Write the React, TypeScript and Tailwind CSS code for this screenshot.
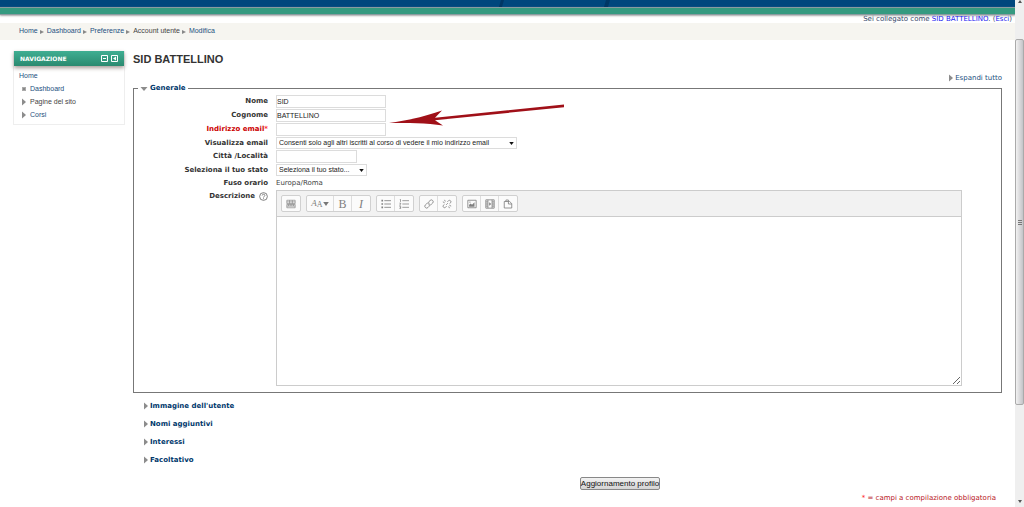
import { useState } from 'react';
import type { ReactNode } from 'react';
import clsx from 'clsx';

const breadcrumbs = ['Home', 'Dashboard', 'Preferenze', 'Account utente', 'Modifica'];
const sections = ["Immagine dell'utente", 'Nomi aggiuntivi', 'Interessi', 'Facoltativo'];

const fieldClass = 'block h-[13px] border border-[#dcdcdc] bg-white text-[7px] leading-[11px] text-[#222] outline-none';

const Triangle = ({ down = false }: { down?: boolean }) => (
    <svg viewBox="0 0 8 8" className={clsx('h-2 w-2 shrink-0', down && 'rotate-90')} aria-hidden="true">
        <path d="M2 .5 6 4 2 7.5Z" fill="#8c8c8c" />
    </svg>
);

const Row = ({ label, htmlFor, required, children }: { label: ReactNode; htmlFor?: string; required?: boolean; children: ReactNode }) => (
    <div className="flex items-start gap-2">
        <label
            htmlFor={htmlFor}
            className={clsx('flex w-[134px] shrink-0 justify-end gap-1 leading-3 font-bold', required ? 'text-[#c00]' : 'text-[#333]')}
        >
            {label}
        </label>
        {children}
    </div>
);

const SelectBox = ({ id, width, option }: { id: string; width: string; option: string }) => (
    <div className={clsx('relative', width)}>
        <select
            id={id}
            className="block h-3 w-full appearance-none border border-[#dcdcdc] bg-white pl-[2px] font-['Liberation_Sans',sans-serif] text-[7px] leading-[10px] text-[#222] outline-none"
        >
            <option>{option}</option>
        </select>
        <svg viewBox="0 0 6 4" className="pointer-events-none absolute top-[5px] right-[3px] h-[3px] w-[5px]" aria-hidden="true">
            <path d="M0 0h6L3 4Z" fill="#111" />
        </svg>
    </div>
);

const Group = ({ children }: { children: ReactNode }) => (
    <div className="flex h-[17px] divide-x divide-[#ddd] rounded-xs border border-[#d0d0d0] bg-[#fbfbfb]">{children}</div>
);

const Tool = ({ name, wide = false, children }: { name: string; wide?: boolean; children: ReactNode }) => (
    <button
        type="button"
        aria-label={name}
        className={clsx('flex h-full items-center justify-center font-["Liberation_Serif",serif] leading-none text-[#808080]', wide ? 'w-[27px]' : 'w-[18px]')}
    >
        {children}
    </button>
);

const Icon = ({ children }: { children: ReactNode }) => (
    <svg viewBox="0 0 12 12" className="h-[10px] w-[10px]" fill="none" stroke="#808080" strokeWidth="1" aria-hidden="true">
        {children}
    </svg>
);

const Toolbar = () => (
    <div className="flex flex-wrap gap-[5px] border-b border-[#ccc] bg-[#f2f2f2] p-1">
        <Group>
            <Tool name="Mostra altri pulsanti">
                <Icon>
                    <path d="M1 1.5h10v4H1zM1 6.5h10v4H1zM1 3.5h10M1 8.5h10M4.3 1.5v4M7.6 1.5v4M3 6.5v2M5 6.5v2M7 6.5v2M9 6.5v2" strokeWidth=".8" />
                </Icon>
            </Tool>
        </Group>
        <Group>
            <Tool name="Stili paragrafo" wide>
                <span className="text-[9px] italic">A</span>
                <span className="pt-[2px] text-[8px]">A</span>
                <svg viewBox="0 0 7 5" className="h-1 w-[6px]" aria-hidden="true">
                    <path d="M0 0h7L3.5 5Z" fill="#777" />
                </svg>
            </Tool>
            <Tool name="Grassetto"><span className="text-[12px]">B</span></Tool>
            <Tool name="Corsivo"><span className="text-[12px] italic">I</span></Tool>
        </Group>
        <Group>
            <Tool name="Elenco puntato">
                <Icon><path d="M4 2h8M4 6h8M4 10h8" /><path d="M.5 2h2M.5 6h2M.5 10h2" strokeWidth="2" /></Icon>
            </Tool>
            <Tool name="Elenco numerato">
                <Icon><path d="M4 2h8M4 6h8M4 10h8M1 .5h.8v3M.5 5h1.5v1L.7 7.2H2.2M.5 8.8H2v2.7H.5M1 10.2h1" strokeWidth=".9" /></Icon>
            </Tool>
        </Group>
        <Group>
            <Tool name="Link">
                <Icon><path d="M6.2 5.8a2.3 2.3 0 0 1 0-3l1-1a2.2 2.2 0 0 1 3.2 3.1L8.6 6.6a2 2 0 0 1-2 .4M5.8 6.2a2.3 2.3 0 0 1 0 3l-1 1a2.2 2.2 0 0 1-3.2-3.1l1.8-1.7a2 2 0 0 1 2-.4" /></Icon>
            </Tool>
            <Tool name="Scollega">
                <Icon><path d="m6.5 3.4 1.4-1.5a1.8 1.8 0 0 1 2.5 2.5L9 5.7M5.5 8.6l-1.4 1.5a1.8 1.8 0 0 1-2.5-2.5L3 6.3M3 1l1 2M1 3.5l2 .8M9 11 8 9M11 8.5l-2-.8M5 7l2-2" /></Icon>
            </Tool>
        </Group>
        <Group>
            <Tool name="Immagine">
                <Icon><path d="M1 1.5h10v9H1z" /><path d="M2.5 9.3V7L4.5 5.5 6 7l3-3.2V9.3Z" fill="#808080" stroke="none" /><circle cx="3.5" cy="3.7" r=".8" fill="#808080" stroke="none" /></Icon>
            </Tool>
            <Tool name="Media">
                <Icon><path d="M1 1h10v10H1zM3.5 1v10M8.5 1v10M1 3.5h2.5M1 6h2.5M1 8.5h2.5M8.5 3.5H11M8.5 6H11M8.5 8.5H11" /><path d="M5 4v4l2.5-2Z" fill="#808080" stroke="none" /></Icon>
            </Tool>
            <Tool name="Gestione file">
                <Icon><path d="M3.5 3V1.2h3V3M1.5 3H8l2.5 2.5v5.3h-9ZM6.5 3v3h4" /></Icon>
            </Tool>
        </Group>
    </div>
);

const Header = () => (
    <header>
        <div className="h-[7px] bg-[#00477d]">
            <svg viewBox="0 0 1015 7" preserveAspectRatio="none" className="h-full w-full" aria-hidden="true">
                <path d="M499 7l2-7h3l-2 7ZM604 7l2-7h4l-2 7Z" fill="#003765" />
            </svg>
        </div>
        <div className="h-2 border-y border-[#8a9ba0] bg-[#359a80] shadow-[0_1px_2px_#aaa]" />
        <p className="h-2 pr-[3px] text-right text-[7px] leading-[8px] text-[#346]">
            Sei collegato come <a href="#profilo" className="text-[#2020f0]">SID BATTELLINO</a>. (<a href="#esci" className="text-[#2020f0]">Esci</a>)
        </p>
        <nav className="flex h-[17px] items-center gap-[2px] bg-[#f6f5f0] px-[19px] font-['Liberation_Sans',sans-serif] text-[7px] text-[#245080]">
            {breadcrumbs.map((item, i) => (
                <div key={item} className="flex items-center gap-[3px]">
                    {i > 0 && (
                        <svg viewBox="0 0 4 4" className="h-1 w-1" aria-hidden="true">
                            <path d="M0 0 4 2 0 4Z" fill="#888" />
                        </svg>
                    )}
                    {item === 'Account utente' ? <span className="text-[#444]">{item}</span> : <a href="#nav">{item}</a>}
                </div>
            ))}
        </nav>
    </header>
);

const Sidebar = () => (
    <aside className="w-[112px] shrink-0 self-start border-x border-b border-[#eee] font-['Liberation_Sans',sans-serif] text-[7px] text-[#245080]">
        <div className="flex h-[15px] items-center gap-[3px] bg-linear-to-b from-[#3fae92] to-[#2b8a70] px-[6px] shadow-[0_2px_4px_#a59a95]">
            <h2 className="flex-1 font-['DejaVu_Sans',sans-serif] text-[6px] font-bold text-white">NAVIGAZIONE</h2>
            <button type="button" aria-label="Minimizza">
                <svg viewBox="0 0 7 7" className="h-[7px] w-[7px]" fill="none" stroke="#fff"><path d="M.5.5h6v6h-6zM2 3.5h3" /></svg>
            </button>
            <button type="button" aria-label="Sposta nel dock">
                <svg viewBox="0 0 7 7" className="h-[7px] w-[7px]" fill="none" stroke="#fff"><path d="M.5.5h6v6h-6z" /><path d="M5 1.5v4l-3-2Z" fill="#fff" stroke="none" /></svg>
            </button>
        </div>
        <ul className="px-[5px] pt-[3px] pb-[3px] leading-[13px]">
            <li><a href="#home">Home</a></li>
            <li className="flex items-center gap-[2px] pl-px">
                <span className="mx-[2px] h-1 w-1 border border-[#aaa] bg-[#888]" />
                <a href="#dashboard">Dashboard</a>
            </li>
            <li className="flex items-center gap-[2px] pl-px text-[#444]"><Triangle />Pagine del sito</li>
            <li className="flex items-center gap-[2px] pl-px"><Triangle /><a href="#corsi">Corsi</a></li>
        </ul>
    </aside>
);

// Red pointer towards the e-mail field
const Pointer = () => (
    <svg viewBox="0 0 176 24" className="pointer-events-none absolute -top-5 left-full z-10 ml-[3px] h-6 w-[176px]" aria-hidden="true">
        <path d="M0 20 C18 17.500 38 13 53 7.500L46 14.700 175 1.600V4.200L46 17.200 54 22.500C38 19.800 18 20.300 0 20Z" fill="#a01018" />
    </svg>
);

const Scrollbar = () => (
    <div className="flex w-[9px] shrink-0 flex-col items-center bg-[#efefef]" aria-hidden="true">
        <svg viewBox="0 0 4 4" className="h-1 w-1"><path d="M0 3h4L2 0Z" fill="#555" /></svg>
        <div className="grow-[36]" />
        <div className="flex w-full grow-[364] flex-col items-center justify-center gap-px rounded-xs border border-[#aaa] bg-linear-to-r from-[#f2f2f2] to-[#c4c4c8]">
            <span className="h-px w-1 bg-[#777]" />
            <span className="h-px w-1 bg-[#777]" />
            <span className="h-px w-1 bg-[#777]" />
        </div>
        <div className="grow-[96]" />
        <svg viewBox="0 0 4 4" className="mb-[3px] h-1 w-1"><path d="M0 0h4L2 3Z" fill="#555" /></svg>
    </div>
);

export default function App() {
    const [nome, setNome] = useState('SID');
    const [cognome, setCognome] = useState('BATTELLINO');
    const [email, setEmail] = useState('');

    return (
        <div className="flex min-h-screen bg-white font-['DejaVu_Sans',sans-serif] text-[7px] text-[#444]">
            <div className="min-w-0 flex-1">
                <Header />
                <div className="flex gap-2 pt-[11px] pr-[13px] pl-[13px]">
                    <Sidebar />
                    <main className="min-w-0 flex-1">
                        <h1 className="font-['Liberation_Sans',sans-serif] text-[11px] leading-4 font-bold text-[#333]">SID BATTELLINO</h1>
                        <div className="mt-[6px] flex justify-end">
                            <button type="button" className="flex items-center leading-[10px] text-[#245080]"><Triangle />Espandi tutto</button>
                        </div>
                        <form onSubmit={(e) => e.preventDefault()}>
                            <fieldset className="border border-[#777] pb-[6px]">
                                <legend className="ml-1 px-[2px] leading-[11px] font-bold text-[#00386c]">
                                    <button type="button" className="flex items-center gap-[2px]"><Triangle down />Generale</button>
                                </legend>
                                <div className="flex flex-col gap-px pt-px">
                                    <Row label="Nome" htmlFor="nome">
                                        <input id="nome" value={nome} onChange={(e) => setNome(e.target.value)} className={clsx(fieldClass, "w-[110px] font-['Liberation_Sans',sans-serif]")} />
                                    </Row>
                                    <Row label="Cognome" htmlFor="cognome">
                                        <input id="cognome" value={cognome} onChange={(e) => setCognome(e.target.value)} className={clsx(fieldClass, "w-[110px] font-['Liberation_Sans',sans-serif]")} />
                                    </Row>
                                    <Row label={<span>Indirizzo email<span className="text-[#f33]">*</span></span>} htmlFor="email" required>
                                        <div className="relative">
                                            <input id="email" type="email" value={email} onChange={(e) => setEmail(e.target.value)} className={clsx(fieldClass, 'w-[110px]')} />
                                            <Pointer />
                                        </div>
                                    </Row>
                                    <Row label="Visualizza email" htmlFor="visualizza">
                                        <SelectBox id="visualizza" width="w-[241px]" option="Consenti solo agli altri iscritti al corso di vedere il mio indirizzo email" />
                                    </Row>
                                    <Row label="Città /Località" htmlFor="citta">
                                        <input id="citta" className={clsx(fieldClass, 'w-[81px]')} />
                                    </Row>
                                    <Row label="Seleziona il tuo stato" htmlFor="stato">
                                        <SelectBox id="stato" width="w-[91px]" option="Seleziona il tuo stato..." />
                                    </Row>
                                    <Row label="Fuso orario"><span className="leading-3">Europa/Roma</span></Row>
                                    <Row
                                        htmlFor="descrizione"
                                        label={
                                            <>
                                                Descrizione
                                                <svg viewBox="0 0 10 10" className="mt-[2px] h-[9px] w-[9px]" fill="none" stroke="#666" strokeWidth=".9" aria-hidden="true">
                                                    <circle cx="5" cy="5" r="4.300" />
                                                    <path d="M3.500 3.900C3.500 2 6.600 2 6.500 3.900 6.400 5 5 4.900 5 6.200M5 7v1" />
                                                </svg>
                                            </>
                                        }
                                    >
                                        <div className="mr-[39px] min-w-0 flex-1 border border-[#ccc]">
                                            <Toolbar />
                                            <textarea id="descrizione" className="block h-[168px] w-full resize-y bg-white p-1 outline-none" />
                                        </div>
                                    </Row>
                                </div>
                            </fieldset>
                            <div className="mt-1 flex flex-col items-start pl-[9px]">
                                {sections.map((section) => (
                                    <button key={section} type="button" className="flex h-[18px] items-center font-bold text-[#00386c]">
                                        <Triangle />
                                        {section}
                                    </button>
                                ))}
                            </div>
                            <div className="mt-2 flex justify-center pl-[105px]">
                                <button type="submit" className="h-[13px] rounded-xs border border-[#888] bg-linear-to-b from-[#f2f2f2] to-[#d4d4d4] font-['Liberation_Sans',sans-serif] text-[8px] leading-[11px] text-[#111]">
                                    Aggiornamento profilo
                                </button>
                            </div>
                        </form>
                        <p className="pt-[3px] pr-[6px] text-right leading-[10px] text-[#b8151c]"><span className="text-[#f22]">*</span> = campi a compilazione obbligatoria</p>
                    </main>
                </div>
            </div>
            <Scrollbar />
        </div>
    );
}
